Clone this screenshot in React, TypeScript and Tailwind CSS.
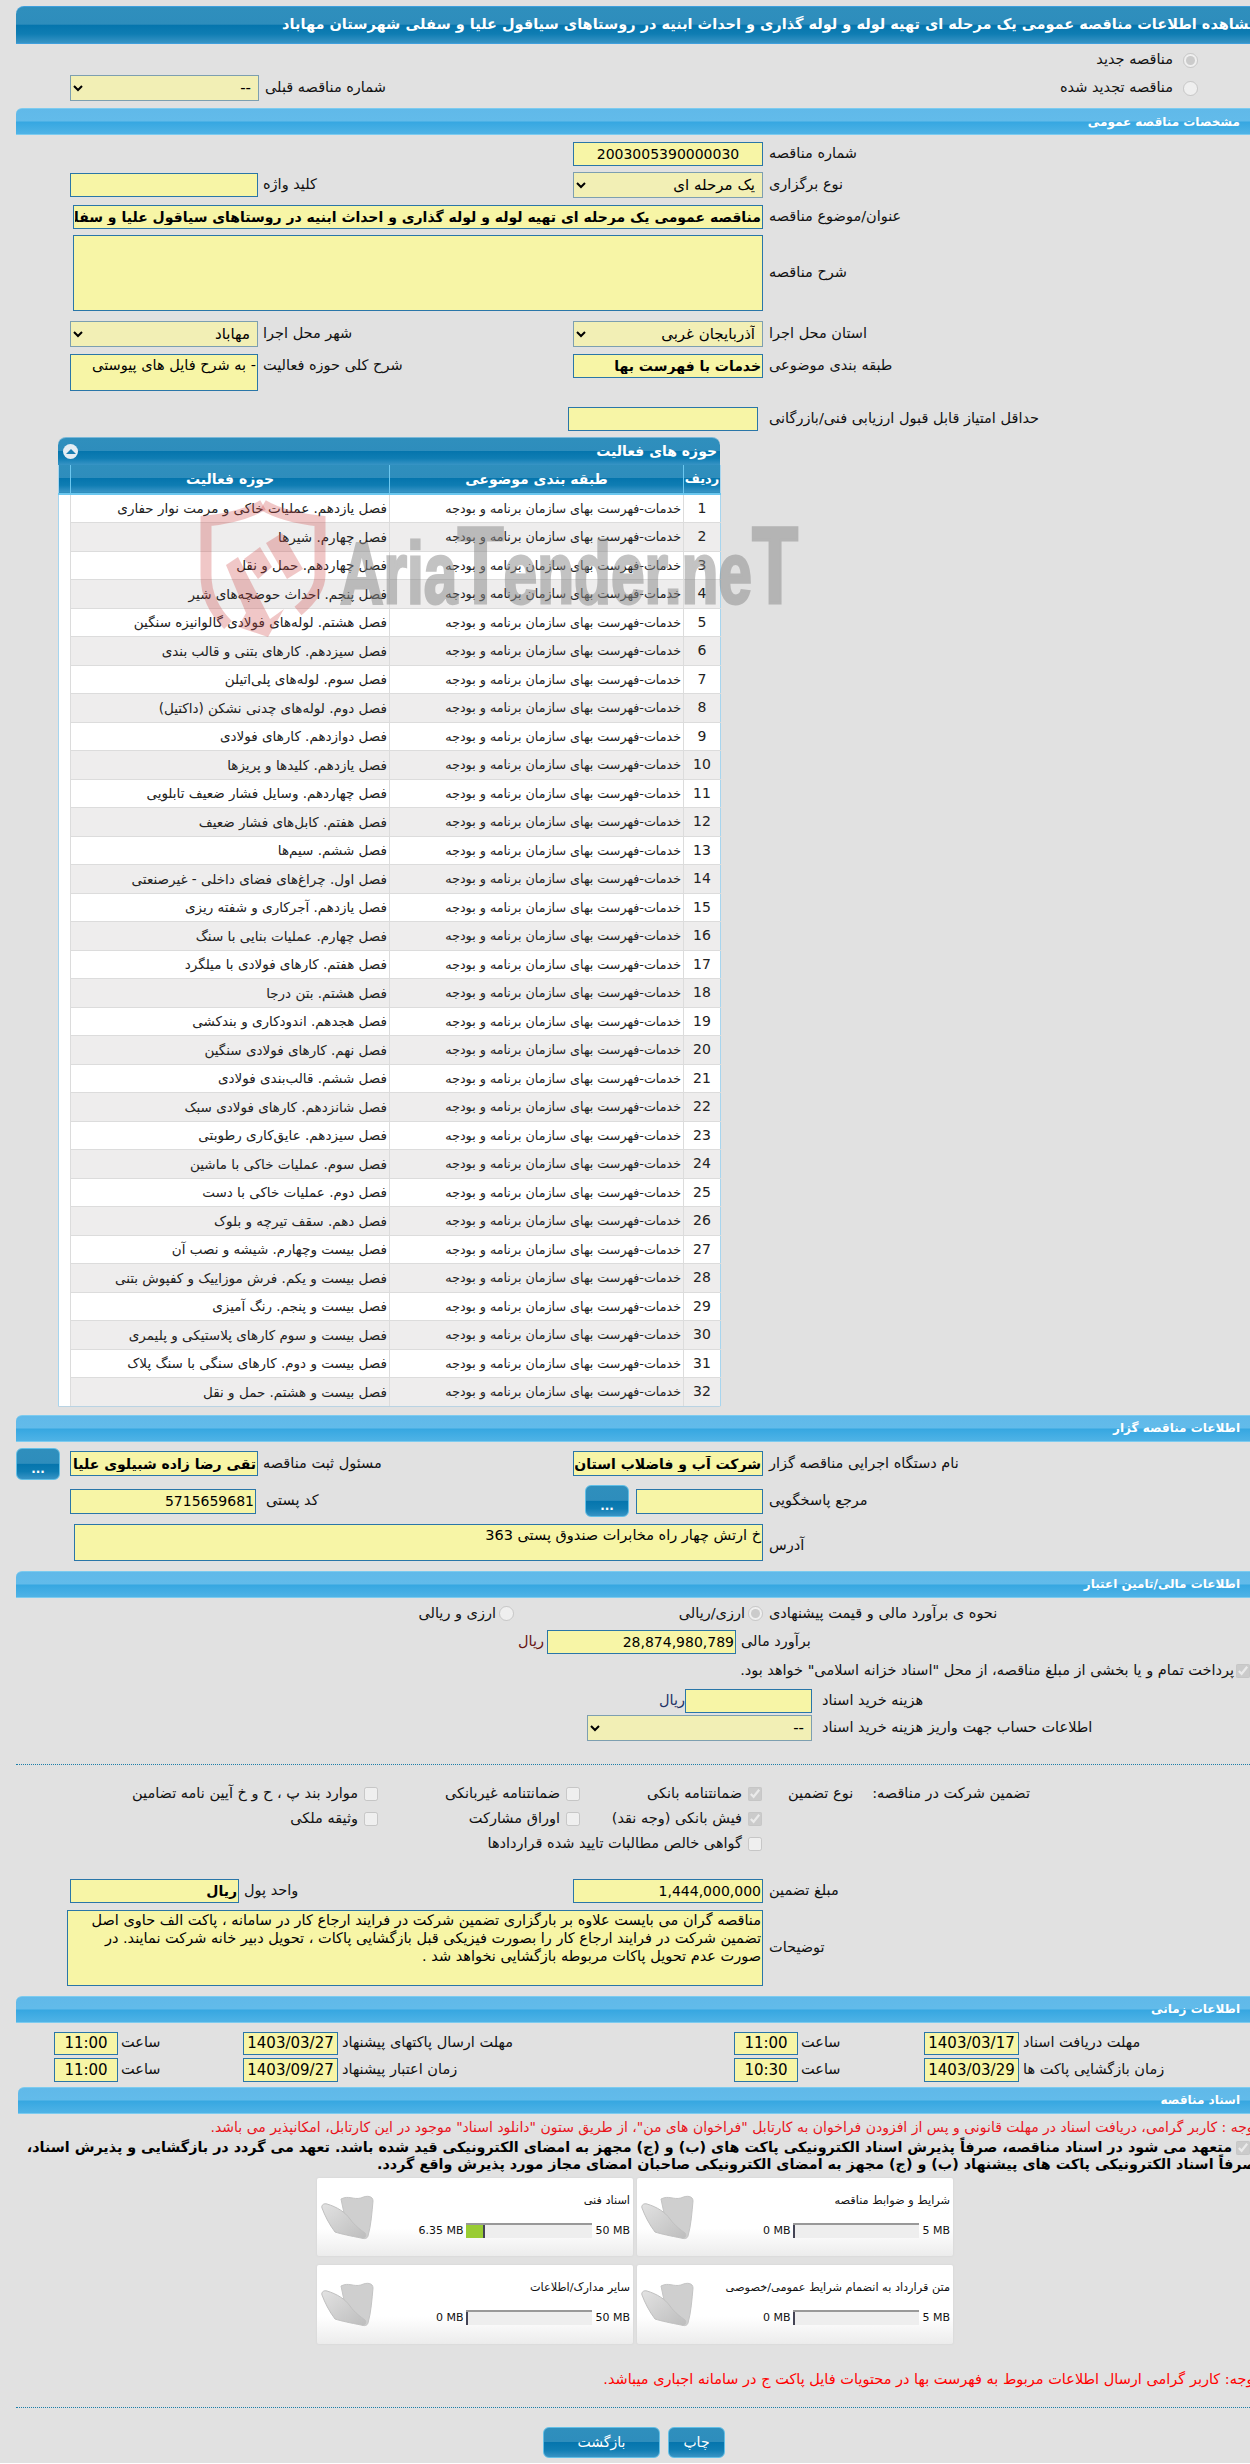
import React from 'react';

const category = 'خدمات-فهرست بهای سازمان برنامه و بودجه';
const activities = [
  'فصل یازدهم. عملیات خاکی و مرمت نوار حفاری',
  'فصل چهارم. شیرها',
  'فصل چهاردهم. حمل و نقل',
  'فصل پنجم. احداث حوضچه‌های شیر',
  'فصل هشتم. لوله‌های فولادی گالوانیزه سنگین',
  'فصل سیزدهم. کارهای بتنی و قالب بندی',
  'فصل سوم. لوله‌های پلی‌اتیلن',
  'فصل دوم. لوله‌های چدنی نشکن (داکتیل)',
  'فصل دوازدهم. کارهای فولادی',
  'فصل یازدهم. کلیدها و پریزها',
  'فصل چهاردهم. وسایل فشار ضعیف تابلویی',
  'فصل هفتم. کابل‌های فشار ضعیف',
  'فصل ششم. سیم‌ها',
  'فصل اول. چراغ‌های فضای داخلی - غیرصنعتی',
  'فصل یازدهم. آجرکاری و شفته ریزی',
  'فصل چهارم. عملیات بنایی با سنگ',
  'فصل هفتم. کارهای فولادی با میلگرد',
  'فصل هشتم. بتن درجا',
  'فصل هجدهم. اندودکاری و بندکشی',
  'فصل نهم. کارهای فولادی سنگین',
  'فصل ششم. قالب‌بندی فولادی',
  'فصل شانزدهم. کارهای فولادی سبک',
  'فصل سیزدهم. عایق‌کاری رطوبتی',
  'فصل سوم. عملیات خاکی با ماشین',
  'فصل دوم. عملیات خاکی با دست',
  'فصل دهم. سقف تیرچه و بلوک',
  'فصل بیست وچهارم. شیشه و نصب آن',
  'فصل بیست و یکم. فرش موزاییک و کفپوش بتنی',
  'فصل بیست و پنجم. رنگ آمیزی',
  'فصل بیست و سوم کارهای پلاستیکی و پلیمری',
  'فصل بیست و دوم. کارهای سنگی با سنگ پلاک',
  'فصل بیست و هشتم. حمل و نقل',
];

const darkBar = 'bg-[linear-gradient(#2f8fbd_0,#2e8dbc_48%,#0575ad_50%,#0f7db3_75%,#3894c5_100%)]';

function SectionBar({ title, className = '' }: { title: string; className?: string }) {
  return (
    <div
      dir="rtl"
      className={`flex items-center pr-[10px] h-[27px] rounded-tl-md border-t border-b border-[#7ccbef] bg-[linear-gradient(#60b9e9_0,#62bbea_48%,#36a7e1_52%,#4fb3e6_100%)] text-white text-[12px] font-bold ${className}`}
    >
      {title}
    </div>
  );
}

function Label({ children, className = '' }: { children: React.ReactNode; className?: string }) {
  return <span dir="rtl" className={`text-[14.5px] text-[#111] text-left whitespace-nowrap ${className}`}>{children}</span>;
}

function TextBox({ value = '', className = '' }: { value?: string; className?: string }) {
  return (
    <input
      readOnly
      dir="rtl"
      value={value}
      className={`block h-[24px] px-px bg-[#f7f5a6] border border-[#2a76a8] text-[14px] text-black outline-none ${className}`}
    />
  );
}

function Area({ value = '', className = '' }: { value?: string; className?: string }) {
  return (
    <textarea
      readOnly
      dir="rtl"
      value={value}
      className={`block resize-none px-px bg-[#f7f5a6] border border-[#2a76a8] text-[14.5px] text-black outline-none ${className}`}
    />
  );
}

function Pick({ value, className = '' }: { value: string; className?: string }) {
  return (
    <select
      disabled
      dir="rtl"
      className={`block h-[26px] pr-[3px] bg-[#f2efb5] border border-[#7d9fb0] text-[15px] text-black opacity-100 ${className}`}
    >
      <option>{value}</option>
    </select>
  );
}

function DotsButton() {
  return (
    <button className={`w-[44px] h-[32px] rounded-md border border-[#62bfe6] ${darkBar} text-white text-[12px] font-bold pt-[10px]`}>...</button>
  );
}

function Check({ checked = false }: { checked?: boolean }) {
  return <input type="checkbox" disabled checked={checked} readOnly className="block w-[14px] h-[14px] shrink-0" />;
}

function Radio({ checked = false }: { checked?: boolean }) {
  return <input type="radio" disabled checked={checked} readOnly className="block w-[15px] h-[15px] shrink-0" />;
}

function Watermark() {
  return (
    <svg className="absolute left-[140px] top-[60px] pointer-events-none" width="610" height="150" viewBox="0 0 610 150">
      <g fill="none" stroke="#c44" strokeOpacity="0.3" strokeWidth="11">
        <path d="M65 8C48 18 28 22 8 24V78C8 100 18 116 30 128" />
        <path d="M65 8C82 18 102 22 122 24V78C122 92 112 104 100 114" />
      </g>
      <g fill="#c44" fillOpacity="0.3">
        <path d="M68 46L84 36L105 72L89 82Z" />
        <path d="M46 62L62 50L74 70L60 82Z" />
        <path d="M28 68L40 60L72 122L86 112L70 140L40 130L48 116Z" />
      </g>
      <text
        x="142"
        y="106"
        textLength="458"
        lengthAdjust="spacingAndGlyphs"
        fontFamily="Liberation Sans"
        fontWeight="700"
        fontSize="88"
        fill="#888"
        stroke="#888"
        strokeWidth="3"
        opacity="0.5"
      >
        Aria<tspan fontSize="110">T</tspan>ender.ne<tspan fontSize="110">T</tspan>
      </text>
    </svg>
  );
}

function ActivityPanel() {
  return (
    <div className="relative ml-[58px] w-[662px] mt-[7px]">
      <div className={`h-[28px] rounded-t-lg flex items-center justify-between pl-[5px] pr-[3px] border-t border-[#7ab8d8] ${darkBar}`}>
        <span className="w-[15px] h-[15px] rounded-full bg-[#e4edf3] flex items-center justify-center">
          <span className="w-0 h-0 border-x-[5px] border-x-transparent border-b-[5px] border-b-[#1a7fb2]" />
        </span>
        <span dir="rtl" className="text-white text-[14px] font-bold">حوزه های فعالیت</span>
      </div>
      <table dir="rtl" className="w-full table-fixed border-collapse border-x border-[#a7d5ee] text-[#222]">
        <thead>
          <tr className={`h-[29px] text-white text-[14px] font-bold ${darkBar} border-b-2 border-[#6cc7ef]`}>
            <th className="w-[37px] font-bold text-[13px]">ردیف</th>
            <th className="w-[294px] font-bold border-x border-[#6cc7ef]">طبقه بندی موضوعی</th>
            <th className="w-[319px] font-bold border-l border-[#6cc7ef]">حوزه فعالیت</th>
            <th className="w-[12px]" />
          </tr>
        </thead>
        <tbody>
          {activities.map((a, i) => (
            <tr key={i} className={`h-[28.5px] ${i % 2 ? 'bg-[#eeeded]' : 'bg-white'}`}>
              <td className="text-center text-[14px] border-b border-[#dcdcdc]">{i + 1}</td>
              <td className="pr-[2px] text-[12.7px] border-x border-b border-[#dcdcdc] whitespace-nowrap">{category}</td>
              <td className="pr-[2px] text-[13.5px] border-l border-b border-[#dcdcdc] whitespace-nowrap">{a}</td>
              <td className="bg-white" />
            </tr>
          ))}
        </tbody>
      </table>
      <div className="h-[1px] -mt-[1px] relative rounded-b bg-[#b9d3e3]" />
      <Watermark />
    </div>
  );
}

function TimeRow({ cells, className = '' }: { cells: string[]; className?: string }) {
  const [l1, d1, t1, l2, d2, t2] = cells;
  return (
    <div className={`grid grid-cols-[64px_125px_95px_396px_64px_126px_95px_1fr] items-center pl-[54px] ${className}`}>
      <TextBox value={t1} className="w-full h-full text-center text-[15px]" />
      <Label className="pl-[3px]">ساعت</Label>
      <TextBox value={d1} className="w-full h-full text-center text-[15px]" />
      <Label className="pl-[4px]">{l1}</Label>
      <TextBox value={t2} className="w-full h-full text-center text-[15px]" />
      <Label className="pl-[3px]">ساعت</Label>
      <TextBox value={d2} className="w-full h-full text-center text-[15px]" />
      <Label className="pl-[4px]">{l2}</Label>
    </div>
  );
}

function Folder() {
  return (
    <svg width="54" height="48" viewBox="0 0 54 48" className="shrink-0">
      <defs>
        <linearGradient id="fld" x1="0" y1="0" x2="1" y2="1">
          <stop offset="0" stopColor="#e2e2e2" />
          <stop offset="1" stopColor="#bdbdbd" />
        </linearGradient>
      </defs>
      <path d="M20 7C28 3 32 8 40 6C46 3 52 4 52 9C51 20 50 34 47 44C46 47 43 47 41 46L24 26Z" fill="#cfcfcf" stroke="#c4c4c4" />
      <path d="M1 16C0 13 3 11 6 12C16 15 24 20 29 27C34 34 40 38 44 41C46 44 44 47 40 46C30 44 20 42 14 40C8 32 4 24 1 16Z" fill="url(#fld)" stroke="#c0c0c0" />
    </svg>
  );
}

function DocCard({ title, used, max, fill = 0, className = '' }: { title: string; used: string; max: string; fill?: number; className?: string }) {
  return (
    <div dir="ltr" className={`flex pl-[4px] pr-[3px] pt-[14px] rounded-[2px] shadow-[0_0_2px_#ccc] bg-[linear-gradient(#fff_0,#fff_65%,#ececec_100%)] ${className}`}>
      <Folder />
      <div className="flex-1 flex flex-col items-end pt-[1px]">
        <span dir="rtl" className="text-[11.3px] text-[#111] whitespace-nowrap leading-[16px]">{title}</span>
        <div className="flex items-center gap-[3px] mt-[14px] text-[11px] text-[#111]">
          <span>{used}</span>
          <div className="w-[126px] h-[15px] bg-[#eee] border-t-2 border-[#999]">
            {/* progress value comes from data */}
            <div className="bg-[#99cc33] border-r-2 border-[#445] h-full" style={{ width: fill + 2 }} />
          </div>
          <span>{max}</span>
        </div>
      </div>
    </div>
  );
}

export default function App() {
  return (
    <div className="relative w-[1250px] h-[2463px] overflow-hidden bg-[#e1e1e1] pt-[6px] font-['DejaVu_Sans',sans-serif] text-[13px]">
      <div dir="rtl" className={`ml-[16px] -mr-[8px] h-[38px] flex items-center rounded-tl-lg border-t border-b border-[#3f9fdc] text-white text-[14.5px] font-bold whitespace-nowrap ${darkBar}`}>
        مشاهده اطلاعات مناقصه عمومی یک مرحله ای تهیه لوله و لوله گذاری و احداث ابنیه در روستاهای سیاقول علیا و سفلی شهرستان مهاباد
      </div>

      <div className="mt-[6px] h-[20px] flex items-center justify-end gap-[10px] pr-[52px]">
        <Label>مناقصه جدید</Label>
        <Radio checked />
      </div>
      <div className="mt-[5px] h-[26px] flex items-center pl-[70px] pr-[52px]">
        <Pick value="--" className="w-[189px]" />
        <Label className="ml-[6px]">شماره مناقصه قبلی</Label>
        <span className="flex-1" />
        <Label className="mr-[10px]">مناقصه تجدید شده</Label>
        <Radio />
      </div>

      <SectionBar title="مشخصات مناقصه عمومی" className="ml-[16px] mt-[7px] h-[26px]" />

      <div className="mt-[7px] h-[23px] flex items-center pl-[573px] gap-[6px]">
        <TextBox value="2003005390000030" className="w-[190px] h-[23px] text-center" />
        <Label>شماره مناقصه</Label>
      </div>
      <div className="mt-[7px] h-[26px] flex items-center pl-[70px]">
        <div className="w-[503px] flex items-center gap-[5px]">
          <TextBox className="w-[188px]" />
          <Label>کلید واژه</Label>
        </div>
        <Pick value="یک مرحله ای" className="w-[190px]" />
        <Label className="ml-[6px]">نوع برگزاری</Label>
      </div>
      <div className="mt-[7px] h-[23px] flex items-center pl-[73px] gap-[6px]">
        <TextBox
          value="مناقصه عمومی یک مرحله ای تهیه لوله و لوله گذاری و احداث ابنیه در روستاهای سیاقول علیا و سفلی شهرستان مهاباد"
          className="w-[690px] h-[23px] font-bold"
        />
        <Label>عنوان/موضوع مناقصه</Label>
      </div>
      <div className="mt-[7px] h-[76px] flex items-center pl-[73px] gap-[6px]">
        <Area className="w-[690px] h-[76px]" />
        <Label>شرح مناقصه</Label>
      </div>
      <div className="mt-[10px] h-[26px] flex items-center pl-[70px]">
        <div className="w-[503px] flex items-center gap-[5px]">
          <Pick value="مهاباد" className="w-[188px]" />
          <Label>شهر محل اجرا</Label>
        </div>
        <Pick value="آذربایجان غربی" className="w-[190px]" />
        <Label className="ml-[6px]">استان محل اجرا</Label>
      </div>
      <div className="mt-[7px] h-[37px] flex items-start pl-[70px]">
        <div className="w-[503px] flex items-start gap-[5px]">
          <Area value="- به شرح فایل های پیوستی" className="w-[188px] h-[37px] px-[4px]" />
          <Label className="mt-[1px]">شرح کلی حوزه فعالیت</Label>
        </div>
        <TextBox value="خدمات با فهرست بها" className="w-[190px] h-[23px] font-bold" />
        <Label className="ml-[6px] mt-[1px]">طبقه بندی موضوعی</Label>
      </div>
      <div className="mt-[16px] h-[23px] flex items-center pl-[568px]">
        <TextBox className="w-[190px] h-[23px]" />
        <Label className="ml-[11px]">حداقل امتیاز قابل قبول ارزیابی فنی/بازرگانی</Label>
      </div>

      <ActivityPanel />

      <SectionBar title="اطلاعات مناقصه گزار" className="ml-[16px] mt-[8px]" />

      <div className="mt-[6px] h-[32px] flex items-center pl-[16px]">
        <div className="w-[557px] flex items-center">
          <DotsButton />
          <TextBox value="تقی رضا زاده شبیلوی علیا" className="ml-[10px] w-[188px] h-[25px] font-bold" />
          <Label className="ml-[5px]">مسئول ثبت مناقصه</Label>
        </div>
        <TextBox value="شرکت آب و فاضلاب استان آذربایجان غربی" className="w-[190px] h-[25px] font-bold" />
        <Label className="ml-[6px]">نام دستگاه اجرایی مناقصه گزار</Label>
      </div>
      <div className="mt-[6px] h-[31px] flex items-center pl-[70px]">
        <div className="w-[515px] flex items-center">
          <TextBox value="5715659681" className="w-[186px] h-[25px]" />
          <Label className="ml-[10px]">کد پستی</Label>
        </div>
        <DotsButton />
        <TextBox className="ml-[7px] w-[127px] h-[25px]" />
        <Label className="ml-[6px]">مرجع پاسخگویی</Label>
      </div>
      <div className="mt-[7px] h-[37px] flex items-center pl-[74px]">
        <Area value="خ ارتش چهار راه مخابرات صندوق پستی 363" className="w-[689px] h-[37px]" />
        <Label className="ml-[6px] pt-[8px]">آدرس</Label>
      </div>

      <SectionBar title="اطلاعات مالی/تامین اعتبار" className="ml-[16px] mt-[10px]" />

      <div className="mt-[6px] h-[20px] flex items-center pl-[420px]">
        <div className="w-[94px] flex items-center justify-end gap-[3px]">
          <Label>ارزی و ریالی</Label>
          <Radio />
        </div>
        <div className="ml-[164px] w-[85px] flex items-center justify-end gap-[3px]">
          <Label>ارزی/ریالی</Label>
          <Radio checked />
        </div>
        <Label className="ml-[6px]">نحوه ی برآورد مالی و قیمت پیشنهادی</Label>
      </div>
      <div className="mt-[6px] h-[24px] flex items-center pl-[518px]">
        <Label className="w-[29px] text-[#611]">ریال</Label>
        <TextBox value="28,874,980,789" className="w-[189px]" />
        <Label className="ml-[5px]">برآورد مالی</Label>
      </div>
      <div dir="rtl" className="mt-[8px] h-[18px] flex items-center gap-[2px]">
        <Check checked />
        <Label>پرداخت تمام و یا بخشی از مبلغ مناقصه، از محل "اسناد خزانه اسلامی" خواهد بود.</Label>
      </div>
      <div className="mt-[9px] h-[24px] flex items-center pl-[661px]">
        <Label className="w-[24px] text-[#236]">ریال</Label>
        <TextBox className="w-[127px]" />
        <Label className="ml-[10px]">هزینه خرید اسناد</Label>
      </div>
      <div className="mt-[3px] h-[25px] flex items-center pl-[587px]">
        <Pick value="--" className="w-[225px] h-[25px]" />
        <Label className="ml-[10px]">اطلاعات حساب جهت واریز هزینه خرید اسناد</Label>
      </div>

      <div className="ml-[16px] mt-[23px] border-t border-dotted border-[#1d7ea8]" />

      <div className="mt-[17px] grid grid-cols-[278px_202px_182px_1fr] grid-rows-[25px_25px_25px] items-center pl-[100px]">
        <div className="flex items-center justify-end gap-[6px]"><Label>موارد بند پ ، ح و خ آیین نامه تضامین</Label><Check /></div>
        <div className="flex items-center justify-end gap-[6px]"><Label>ضمانتنامه غیربانکی</Label><Check /></div>
        <div className="flex items-center justify-end gap-[6px]"><Label>ضمانتنامه بانکی</Label><Check checked /></div>
        <div className="flex items-center pl-[26px] gap-[19px]"><Label>نوع تضمین</Label><Label>تضمین شرکت در مناقصه:</Label></div>
        <div className="flex items-center justify-end gap-[6px]"><Label>وثیقه ملکی</Label><Check /></div>
        <div className="flex items-center justify-end gap-[6px]"><Label>اوراق مشارکت</Label><Check /></div>
        <div className="flex items-center justify-end gap-[6px]"><Label>فیش بانکی (وجه نقد)</Label><Check checked /></div>
        <span />
        <div className="col-span-3 flex items-center justify-end gap-[6px]"><Label>گواهی خالص مطالبات تایید شده قراردادها</Label><Check /></div>
      </div>

      <div className="mt-[22px] h-[24px] flex items-center pl-[70px]">
        <div className="w-[503px] flex items-center gap-[5px]">
          <TextBox value="ریال" className="w-[169px] font-bold" />
          <Label>واحد پول</Label>
        </div>
        <TextBox value="1,444,000,000" className="w-[190px]" />
        <Label className="ml-[6px]">مبلغ تضمین</Label>
      </div>
      <div className="mt-[7px] h-[76px] flex items-center pl-[67px]">
        <Area
          value="مناقصه گران می بایست علاوه بر بارگزاری تضمین شرکت در فرایند ارجاع کار در سامانه ، پاکت الف حاوی اصل تضمین شرکت در فرایند ارجاع کار را بصورت فیزیکی قبل بازگشایی پاکات ، تحویل دبیر خانه شرکت نمایند. در صورت عدم تحویل پاکات مربوطه بازگشایی نخواهد شد ."
          className="w-[696px] h-[76px] leading-[18px]"
        />
        <Label className="ml-[6px]">توضیحات</Label>
      </div>

      <SectionBar title="اطلاعات زمانی" className="ml-[16px] mt-[10px] h-[26px]" />

      <TimeRow
        className="mt-[9px] h-[23px]"
        cells={['مهلت ارسال پاکتهای پیشنهاد', '1403/03/27', '11:00', 'مهلت دریافت اسناد', '1403/03/17', '11:00']}
      />
      <TimeRow
        className="mt-[3px] h-[24px]"
        cells={['زمان اعتبار پیشنهاد', '1403/09/27', '11:00', 'زمان بازگشایی پاکت ها', '1403/03/29', '10:30']}
      />

      <SectionBar title="اسناد مناقصه" className="ml-[18px] mt-[5px]" />

      <div dir="rtl" className="mt-[5px] -mr-[8px] h-[17px] flex items-center text-[14px] text-[#e8141c] whitespace-nowrap">
        توجه : کاربر گرامی، دریافت اسناد در مهلت قانونی و پس از افزودن فراخوان به کارتابل "فراخوان های من"، از طریق ستون "دانلود اسناد" موجود در این کارتابل، امکانپذیر می باشد.
      </div>
      <div dir="rtl" className="mt-[3px] -mr-[4px] pr-[4px] text-[14.3px] leading-[17px] font-bold text-black whitespace-nowrap">
        <input type="checkbox" disabled checked readOnly className="inline-block w-[14px] h-[14px] ml-[4px] align-middle" />
        متعهد می شود در اسناد مناقصه، صرفاً پذیرش اسناد الکترونیکی پاکت های (ب) و (ج) مجهز به امضای الکترونیکی قید شده باشد. تعهد می گردد در بازگشایی و پذیرش اسناد،
        <br />
        <span className="-mr-[6px]">صرفاً اسناد الکترونیکی پاکت های پیشنهاد (ب) و (ج) مجهز به امضای الکترونیکی صاحبان امضای مجاز مورد پذیرش واقع گردد.</span>
      </div>

      <div dir="rtl" className="mt-[5px] ml-[317px] w-[636px] grid grid-cols-2 gap-x-[4px] gap-y-[9px]">
        <DocCard title="شرایط و ضوابط مناقصه" used="0 MB" max="5 MB" className="h-[78px]" />
        <DocCard title="اسناد فنی" used="6.35 MB" max="50 MB" fill={17} className="h-[78px]" />
        <DocCard title="متن قرارداد به انضمام شرایط عمومی/خصوصی" used="0 MB" max="5 MB" className="h-[79px]" />
        <DocCard title="سایر مدارک/اطلاعات" used="0 MB" max="50 MB" className="h-[79px]" />
      </div>

      <div dir="rtl" className="mt-[27px] -mr-[8px] h-[18px] flex items-center text-[14.5px] text-[#f00] whitespace-nowrap">
        توجه: کاربر گرامی ارسال اطلاعات مربوط به فهرست بها در محتویات فایل پاکت ج در سامانه اجباری میباشد.
      </div>

      <div className="ml-[16px] mt-[18px] border-t border-dotted border-[#1d7ea8]" />

      <div className="mt-[19px] h-[31px] flex justify-start pl-[543px] gap-[8px]">
        <button className={`w-[117px] h-full rounded-md border border-[#62bfe6] text-white text-[14px] ${darkBar}`}>بازگشت</button>
        <button className={`w-[57px] h-full rounded-md border border-[#62bfe6] text-white text-[14px] ${darkBar}`}>چاپ</button>
      </div>
    </div>
  );
}
